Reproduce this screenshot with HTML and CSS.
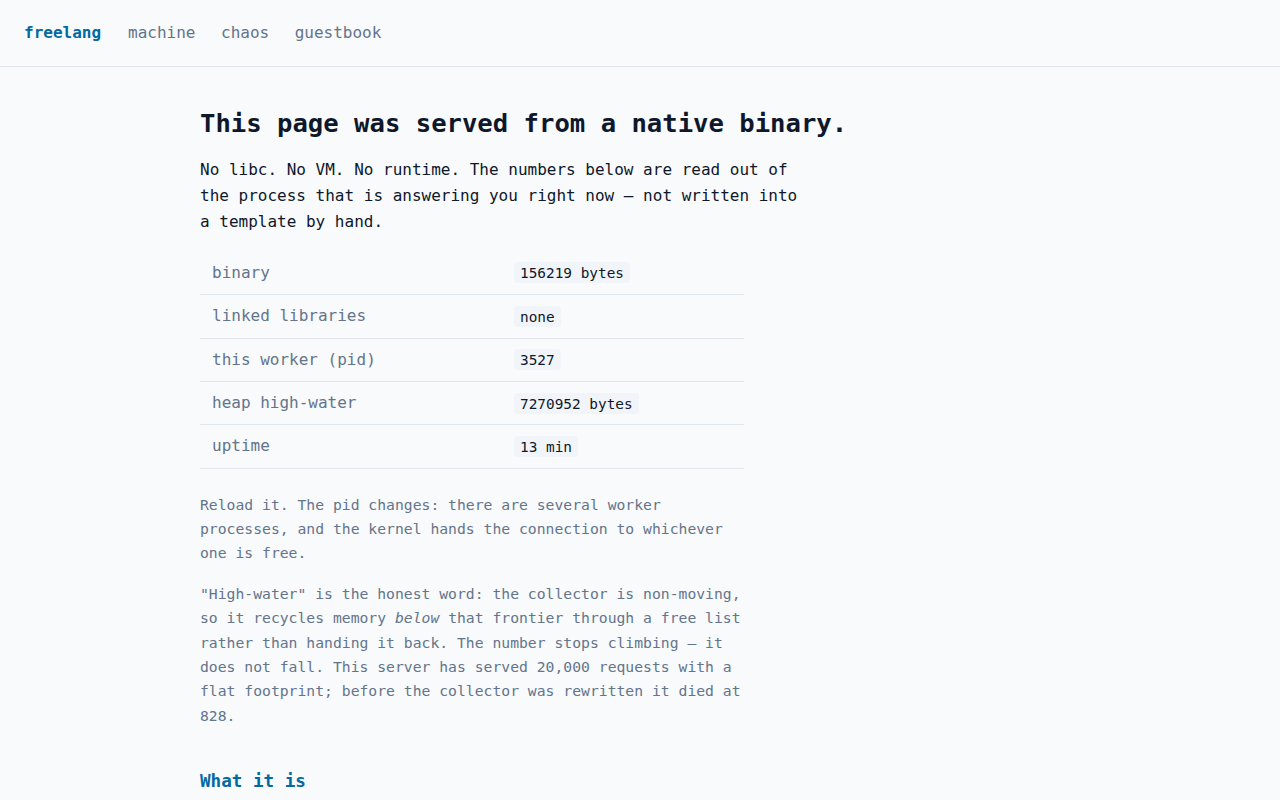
FILE: index.html
```html
<!DOCTYPE html>
<html lang="en">
<head>
	<meta charset="UTF-8">
	<title>freelang</title>
	<link rel="stylesheet" href="styles.css">
</head>
<body>
	<header class="topbar">
		<nav class="nav">
			<a class="brand" href="#">freelang</a>
			<a href="#">machine</a>
			<a href="#">chaos</a>
			<a href="#">guestbook</a>
		</nav>
	</header>
	<main class="page">
		<h1>This page was served from a native binary.</h1>
		<p class="lead">No libc. No VM. No runtime. The numbers below are read out of the process that is answering you right now — not written into a template by hand.</p>
		<div class="facts">
			<table class="stats">
				<tr><td>binary</td><td><code>156219 bytes</code></td></tr>
				<tr><td>linked libraries</td><td><code>none</code></td></tr>
				<tr><td>this worker (pid)</td><td><code>3527</code></td></tr>
				<tr><td>heap high-water</td><td><code>7270952 bytes</code></td></tr>
				<tr><td>uptime</td><td><code>13 min</code></td></tr>
			</table>
			<p class="note">Reload it. The pid changes: there are several worker processes, and the kernel hands the connection to whichever one is free.</p>
			<p class="note">"High-water" is the honest word: the collector is non-moving, so it recycles memory <em>below</em> that frontier through a free list rather than handing it back. The number stops climbing — it does not fall. This server has served 20,000 requests with a flat footprint; before the collector was rewritten it died at 828.</p>
		</div>
		<h2>What it is</h2>
	</main>
</body>
</html>
```

FILE: styles.css
```css
html, body{
	margin: 0;
	padding: 0;
}
body{
	background: #f8fafc;
	color: #0f172a;
	font-family: "DejaVu Sans Mono", "Liberation Mono", monospace;
	font-size: 16px;
	line-height: 1.65;
}
a{
	text-decoration: none;
}
.topbar{
	border-bottom: 1px solid #e2e8f0;
	padding: 20px 24px;
}
.nav{
	display: flex;
	gap: 25.5px;
}
.nav a{
	color: #64748b;
}
.nav .brand{
	color: #0369a1;
	font-weight: bold;
	margin-right: 1.5px;
}
.page{
	width: 880px;
	margin: 0 auto;
	padding: 40px 0 40px;
}
h1{
	font-size: 1.6rem;
	line-height: 1.3;
	margin: 0 0 16px;
}
.lead{
	max-width: 600px;
	margin: 0 0 16px;
}
.facts{
	width: 544px;
}
.stats{
	width: 100%;
	border-collapse: collapse;
	margin-bottom: 24px;
}
.stats td{
	padding: 8px 12px;
	border-bottom: 1px solid #e2e8f0;
	vertical-align: middle;
}
.stats td:first-child{
	width: 278px;
	color: #64748b;
}
code{
	font-family: "DejaVu Sans Mono", monospace;
	font-size: 0.9em;
	background: #f1f5f9;
	padding: 2.5px 6px;
	border-radius: 4px;
}
.note{
	font-size: 0.92em;
	color: #64748b;
	margin: 0 0 16.5px;
}
h2{
	color: #0369a1;
	font-size: 1.1rem;
	margin: 39px 0 10px;
}
```
